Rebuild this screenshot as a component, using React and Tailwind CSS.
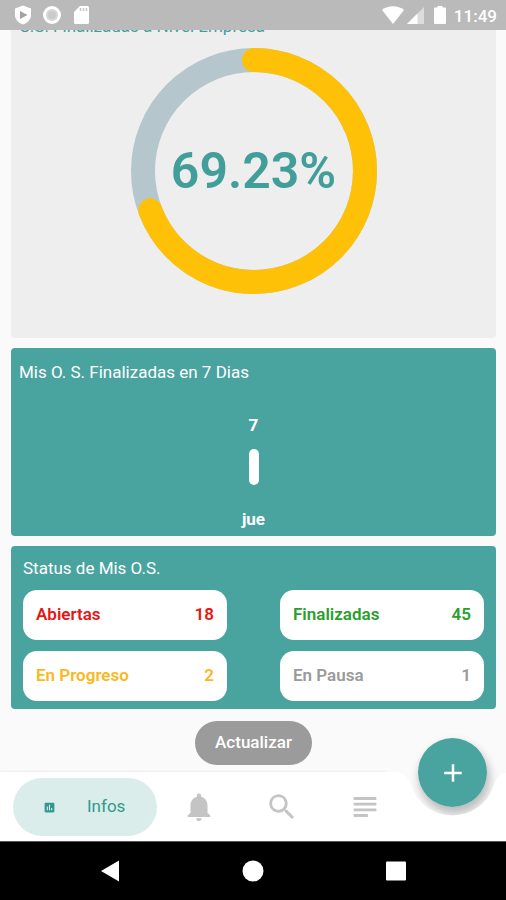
import React from 'react';
import { MdAdd, MdAssessment, MdNotifications, MdSearch, MdSubject } from 'react-icons/md';

const percent = 69.23;

const statusItems = [
  { label: 'Abiertas', value: 18, color: 'text-[#e81414]' },
  { label: 'Finalizadas', value: 45, color: 'text-[#28a02c]' },
  { label: 'En Progreso', value: 2, color: 'text-[#fbb81e]' },
  { label: 'En Pausa', value: 1, color: 'text-[#9a9a9a]' },
];

const tabs = [
  { label: 'Notificaciones', Icon: MdNotifications },
  { label: 'Buscar', Icon: MdSearch },
  { label: 'Lista', Icon: MdSubject },
];

const StatusBar = () => (
  <header className="relative z-10 flex h-[30px] items-center justify-between bg-[#bababa] pr-[9px] pl-[14px] text-white">
    <div className="flex items-center gap-[11px]">
      <svg className="h-5 w-[18px]" viewBox="0 0 18 20" aria-hidden="true">
        <path fill="currentColor" d="M9 0.5 17 3.4V10c0 4.6-3.4 7.6-8 9.6C4.4 17.6 1 14.6 1 10V3.4z" />
        <path fill="#a3a3a3" d="M6 6v8l7.5-4z" />
      </svg>
      <svg className="h-5 w-5" viewBox="0 0 20 20" aria-hidden="true">
        <circle cx="9" cy="10" r="7.5" fill="#d6d6d6" stroke="currentColor" strokeWidth="3" />
        <circle cx="9" cy="10" r="4" fill="#cbcbcb" />
      </svg>
      <svg className="h-5 w-4" viewBox="0 0 16 20" aria-hidden="true">
        <path fill="currentColor" d="M6 1h7.5A1.5 1.5 0 0 1 15 2.5v15a1.5 1.5 0 0 1-1.5 1.5h-12A1.5 1.5 0 0 1 0 17.5V7z" />
        <path stroke="#c8c8c8" strokeWidth="1.5" d="M6.5 3v3M9.5 3v3M12.5 3v3" />
      </svg>
    </div>
    <div className="flex items-center">
      <svg className="h-5 w-[22px]" viewBox="0 0 22 20" aria-hidden="true">
        <path fill="currentColor" d="M0 5C6 0 16 0 22 5L11 19z" />
      </svg>
      <svg className="ml-0.5 h-5 w-[18px]" viewBox="0 0 18 20" aria-hidden="true">
        <path fill="#dcdcdc" d="M18 2v17H1z" />
        <path fill="currentColor" d="M11.5 8.5V19H1z" />
      </svg>
      <svg className="ml-2.5 h-5 w-3" viewBox="0 0 12 20" aria-hidden="true">
        <path fill="currentColor" d="M3.5 1h5V2.5H11a1 1 0 0 1 1 1V18a1 1 0 0 1-1 1H1a1 1 0 0 1-1-1V3.5a1 1 0 0 1 1-1h2.5z" />
      </svg>
      <span className="ml-2 pt-0.5 text-[17px] leading-5 font-medium">11:49</span>
    </div>
  </header>
);

const ProgressRing = ({ value }) => (
  <div className="relative mx-auto size-[246px]">
    <svg className="size-full -rotate-90" viewBox="0 0 246 246" fill="none" aria-hidden="true">
      <circle cx="123" cy="123" r="111" stroke="#b5c7cc" strokeWidth="24" />
      <circle
        cx="123"
        cy="123"
        r="111"
        stroke="#ffc107"
        strokeWidth="24"
        strokeLinecap="round"
        pathLength="100"
        strokeDasharray={`${value} 100`}
      />
    </svg>
    <div className="absolute inset-0 flex items-center justify-center text-[50px] font-semibold text-[#429e9a]">
      {value}%
    </div>
  </div>
);

const BottomNav = () => (
  <nav className="relative h-[69px]">
    {/* shadow of the round button, kept under the bar so it only shows in the notch */}
    <div className="absolute -top-[34px] right-[19px] size-[69px] rounded-full shadow-[2px_6px_10px_1px_rgba(0,0,0,0.25)]" />
    <div className="absolute inset-0 flex">
      <div className="flex-1 bg-white shadow-[0_-1px_2px_rgba(0,0,0,0.05)]" />
      <svg className="h-full w-[120px]" viewBox="0 0 120 69" aria-hidden="true">
        <path fill="#ffffff" d="M0 0h8C18 0 22 5 25 13A43.5 43.5 0 0 0 108 13C110 6 114 2 120 1V69H0z" />
      </svg>
    </div>

    <div className="relative flex h-full items-center pt-px pr-[100px] pl-[13px]">
      <button className="flex h-[58px] w-36 items-center rounded-full bg-[#daedea] pl-[30px] text-[#319a8e]">
        <MdAssessment className="size-[13px]" />
        <span className="ml-[31px] text-[17px]">Infos</span>
      </button>
      {tabs.map(({ label, Icon }) => (
        <button key={label} aria-label={label} className="flex h-[58px] flex-1 items-center justify-center text-[#c4c4c4]">
          <Icon className="size-[34px]" />
        </button>
      ))}
    </div>

    <button
      aria-label="Agregar"
      className="absolute -top-[34px] right-[19px] flex size-[69px] items-center justify-center rounded-full bg-[#49a39f] text-white"
    >
      <MdAdd className="size-[30px]" />
    </button>
  </nav>
);

const SystemNav = () => (
  <div className="flex h-[59px] items-center justify-center gap-[121px] border-t border-[#555] bg-black text-white">
    <button aria-label="Atrás">
      <svg className="size-[22px]" viewBox="0 0 22 22">
        <path fill="currentColor" d="M20 0.5v21L2 11z" />
      </svg>
    </button>
    <button aria-label="Inicio">
      <svg className="size-[22px]" viewBox="0 0 22 22">
        <circle cx="11" cy="11" r="10.5" fill="currentColor" />
      </svg>
    </button>
    <button aria-label="Recientes">
      <svg className="size-[22px]" viewBox="0 0 22 22">
        <rect x="1" y="1.5" width="20" height="19" rx="1" fill="currentColor" />
      </svg>
    </button>
  </div>
);

const App = () => {
  return (
    <div className="flex min-h-screen flex-col overflow-hidden bg-[#fafafa] font-[Roboto,sans-serif]">
      <StatusBar />

      <main className="flex flex-1 flex-col gap-2.5 pr-2.5 pl-[11px]">
        <section className="-mt-4 h-[324px] rounded bg-[#eeeeee] px-2">
          <h2 className="mb-2.5 text-[17px] leading-6 text-[#429e9a]">O.S. Finalizadas a Nivel Empresa</h2>
          <ProgressRing value={percent} />
        </section>

        <section className="h-[188px] rounded bg-[#49a39f] px-2 pt-3 text-white">
          <h2 className="text-[17px] leading-6">Mis O. S. Finalizadas en 7 Dias</h2>
          <div className="mt-[29px] flex flex-col items-center text-[17px] leading-6 font-bold">
            <span>7</span>
            <div className="my-3 h-9 w-2.5 rounded-full bg-white" />
            <span className="mt-2.5">jue</span>
          </div>
        </section>

        <section className="rounded bg-[#49a39f] px-3 pt-2.5 pb-2">
          <h2 className="text-[17px] leading-6 text-white">Status de Mis O.S.</h2>
          <div className="mt-2.5 grid grid-cols-2 gap-x-[53px] gap-y-[11px]">
            {statusItems.map((item) => (
              <div
                key={item.label}
                className={`flex h-[50px] items-center justify-between rounded-[14px] bg-white px-[13px] text-[17px] font-semibold ${item.color}`}
              >
                <span>{item.label}</span>
                <span>{item.value}</span>
              </div>
            ))}
          </div>
        </section>

        <button className="mt-0.5 h-11 self-center rounded-full bg-[#9b9b9b] px-5 text-[17px] font-medium text-white">
          Actualizar
        </button>
      </main>

      <BottomNav />
      <SystemNav />
    </div>
  );
};

export default App;
